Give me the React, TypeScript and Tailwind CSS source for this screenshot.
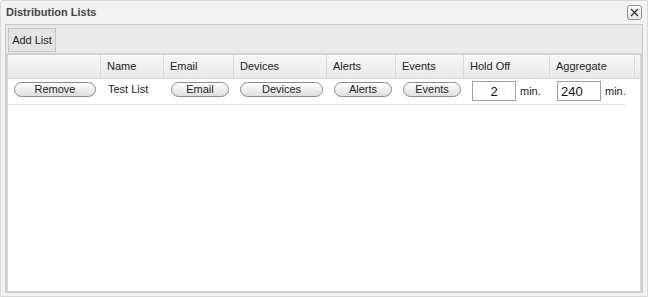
import React from "react";

type Col = { label: string; width: number };

const cols: Col[] = [
  { label: "", width: 93 },
  { label: "Name", width: 63 },
  { label: "Email", width: 70 },
  { label: "Devices", width: 93 },
  { label: "Alerts", width: 69 },
  { label: "Events", width: 68 },
  { label: "Hold Off", width: 86 },
  { label: "Aggregate", width: 85 },
];

function PillButton({ label, width }: { label: string; width: number }) {
  return (
    <button
      className="h-[15px] rounded-full border border-[#8c8c8c] bg-gradient-to-b from-white to-[#dedede] text-[11px] leading-[13px] text-[#222]"
      style={{ width }}
    >
      {label}
    </button>
  );
}

function MinutesInput({ value, align }: { value: string; align: "center" | "left" }) {
  return (
    <div className="flex items-center gap-[4px]">
      <input
        readOnly
        value={value}
        className={`h-[20px] w-[44px] border border-[#a0a0a0] bg-white px-[3px] text-[13px] text-[#111] outline-none ${
          align === "center" ? "text-center" : "text-left"
        }`}
      />
      <span className="text-[11px] text-[#222]">min.</span>
    </div>
  );
}

export default function App() {
  return (
    <div
      className="flex h-[297px] w-[648px] flex-col rounded-tl-[3px] border border-[#d8d8d8] bg-[#f2f2f2]"
      style={{ fontFamily: '"Liberation Sans", Arial, sans-serif' }}
    >
      {/* title bar */}
      <div className="flex h-[23px] items-center justify-between pl-[5px] pr-[5px]">
        <span className="text-[11px] font-bold text-[#454545]">Distribution Lists</span>
        <button className="flex h-[15px] w-[15px] items-center justify-center rounded-[3px] border border-[#8f8f8f] bg-gradient-to-b from-white to-[#e6e6e6]">
          <svg width="9" height="9" viewBox="0 0 9 9">
            <path d="M1 1 L8 8 M8 1 L1 8" stroke="#333" strokeWidth="1.3" />
          </svg>
        </button>
      </div>

      {/* body */}
      <div className="mx-[4px] mb-[3px] flex flex-1 flex-col border-l border-r border-t border-[#cacaca] bg-[#e9e9e9]">
        <div className="flex px-[2px] pb-[1px] pt-[3px]">
          <button className="h-[24px] w-[48px] border border-[#c6c6c6] bg-[#e4e4e4] text-[11px] text-[#222]">
            Add List
          </button>
        </div>

        <div className="flex flex-1 flex-col border-2 border-[#d2d2d2] bg-white">
          {/* header */}
          <div className="flex h-[24px] border-b border-[#d6d6d6] bg-gradient-to-b from-[#f7f7f7] to-[#e8e8e8]">
            {cols.map((c, i) => (
              <div
                key={i}
                className="flex items-center border-r border-[#d8d8d8] pl-[6px] text-[11px] text-[#222]"
                style={{ width: c.width }}
              >
                {c.label}
              </div>
            ))}
            <div className="flex-1" />
          </div>

          {/* row */}
          <div className="flex h-[26px] w-[618px] items-start border-b border-[#e6e6e6]">
            <div className="flex w-[93px] pl-[6px] pt-[3px]">
              <PillButton label="Remove" width={82} />
            </div>
            <div className="w-[63px] pl-[7px] pt-[3px] text-[11px] leading-[15px] text-[#222]">Test List</div>
            <div className="flex w-[70px] pl-[7px] pt-[3px]">
              <PillButton label="Email" width={58} />
            </div>
            <div className="flex w-[93px] pl-[6px] pt-[3px]">
              <PillButton label="Devices" width={83} />
            </div>
            <div className="flex w-[69px] pl-[7px] pt-[3px]">
              <PillButton label="Alerts" width={58} />
            </div>
            <div className="flex w-[68px] pl-[7px] pt-[3px]">
              <PillButton label="Events" width={58} />
            </div>
            <div className="flex w-[86px] pl-[8px] pt-[2px]">
              <MinutesInput value="2" align="center" />
            </div>
            <div className="flex flex-1 pl-[7px] pt-[2px]">
              <MinutesInput value="240" align="left" />
            </div>
          </div>
        </div>
      </div>
    </div>
  );
}
